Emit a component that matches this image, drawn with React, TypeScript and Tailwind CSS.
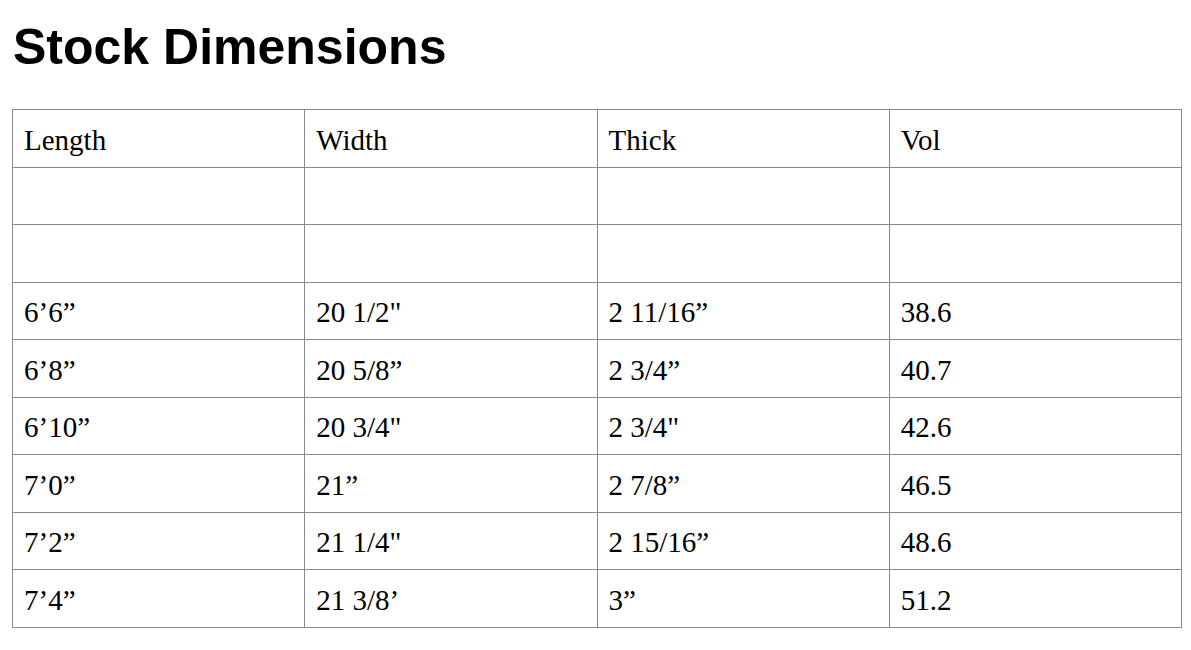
const HEAD = ['Length', 'Width', 'Thick', 'Vol'];

const ROWS = [
  ['', '', '', ''],
  ['', '', '', ''],
  ['6\u20196\u201d', '20 1/2"', '2 11/16\u201d', '38.6'],
  ['6\u20198\u201d', '20 5/8\u201d', '2 3/4\u201d', '40.7'],
  ['6\u201910\u201d', '20 3/4"', '2 3/4"', '42.6'],
  ['7\u20190\u201d', '21\u201d', '2 7/8\u201d', '46.5'],
  ['7\u20192\u201d', '21 1/4"', '2 15/16\u201d', '48.6'],
  ['7\u20194\u201d', '21 3/8\u2019', '3\u201d', '51.2'],
];

export default function App() {
  return (
    <div className="min-h-[650px] bg-white px-[12px] text-black">
      <h1 className="pt-[22px] pl-px font-['Liberation_Sans',Arial,sans-serif] text-[50px] font-bold leading-[50px]">
        Stock Dimensions
      </h1>

      <table className="mt-[37px] w-[1170px] table-fixed border-collapse font-['Liberation_Serif','Times_New_Roman',serif] text-[29px]">
        <tbody>
          <tr className="h-[57.5px]">
            {HEAD.map((h) => (
              <td key={h} className="border border-[#8a8a8a] pl-[11px] pt-[4px] align-middle">
                {h}
              </td>
            ))}
          </tr>
          {ROWS.map((r, i) => (
            <tr key={i} className="h-[57.5px]">
              {r.map((c, j) => (
                <td key={j} className="border border-[#8a8a8a] pl-[11px] pt-[4px] align-middle">
                  {c}
                </td>
              ))}
            </tr>
          ))}
        </tbody>
      </table>
    </div>
  );
}
